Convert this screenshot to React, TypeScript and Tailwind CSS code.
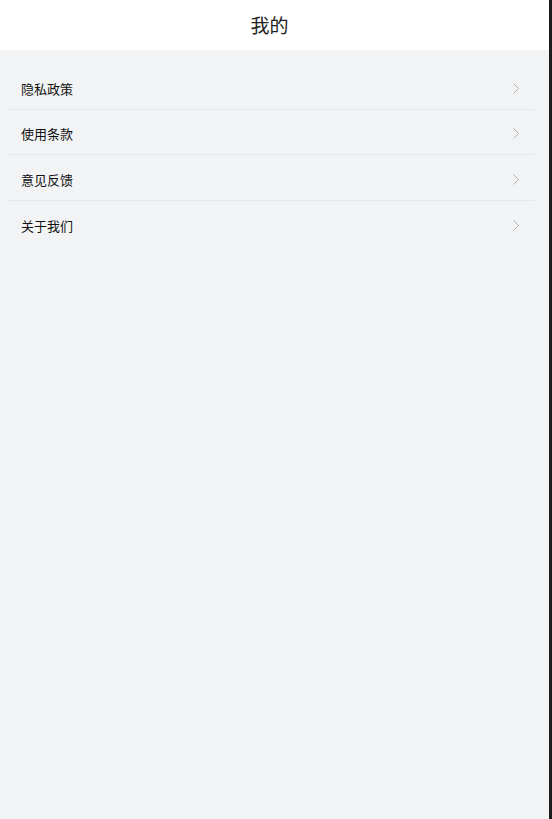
const items = ['隐私政策', '使用条款', '意见反馈', '关于我们'];

function Chevron() {
  return (
    <svg width="8" height="13" viewBox="0 0 8 13" fill="none" className="text-[#b0b0b0]">
      <path d="M1.5 1.5 L6.5 6.5 L1.5 11.5" stroke="currentColor" strokeWidth="1" />
    </svg>
  );
}

export default function App() {
  return (
    <div
      className="flex h-[819px] w-[552px] bg-[#1c1c1c]"
      style={{ fontFamily: '"Noto Sans CJK SC", "Noto Sans", sans-serif' }}
    >
      <div className="flex w-[549px] flex-col bg-[#f2f3f5]">
        {/* Header */}
        <header className="flex h-[50px] items-center justify-center bg-white">
          <h1 className="text-[19px] text-[#222] pr-[10px]">我的</h1>
        </header>

        {/* Menu */}
        <ul className="mt-[14px] pl-[7px] pr-[15px]">
          {items.map((label, i) => (
            <li
              key={label}
              className={`flex h-[45.5px] items-center justify-between pl-[14px] pr-[14px] pt-[4px] ${
                i < items.length - 1 ? 'border-b border-[#e6e7e9]' : ''
              }`}
            >
              <span className="text-[13px] text-[#111]">{label}</span>
              <Chevron />
            </li>
          ))}
        </ul>
      </div>
    </div>
  );
}
